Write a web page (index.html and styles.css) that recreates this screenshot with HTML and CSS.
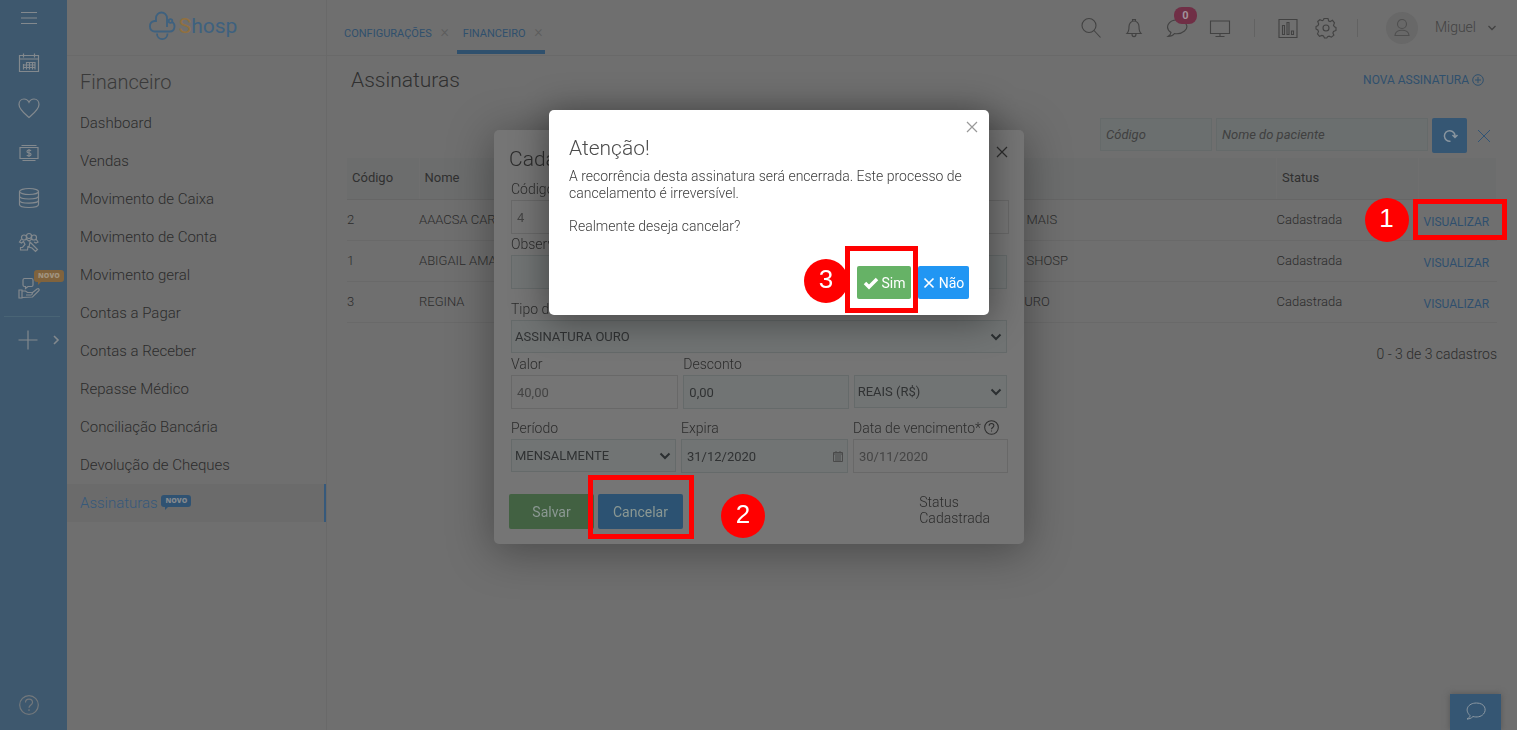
FILE: index.html
```html
<!DOCTYPE html>
<html lang="pt-BR">
<head>
<meta charset="utf-8">
<title>Shosp - Assinaturas</title>
<link rel="stylesheet" href="styles.css">
</head>
<body>
<div class="app">
  <nav class="rail" aria-label="Módulos">
    <button class="rail-item menu-toggle" aria-label="Menu"><svg width="20" height="20" viewBox="0 0 20 20"><path d="M2 4.500h16M2 10h16M2 15.500h16"/></svg></button>
    <button class="rail-item" aria-label="Agenda"><svg width="22" height="22" viewBox="0 0 22 22"><path d="M1.500 3.500h19v16h-19zM1.500 7h19M5.500 1.500v4M16.500 1.500v4M8 10.500h9M5 13h12M5 15.500h12M5.500 12v5.500M8.500 10v7.500M11.500 10v7.500M14.500 10v7.500M17 10v7.500"/></svg></button>
    <button class="rail-item" aria-label="Saúde"><svg width="24" height="22" viewBox="0 0 24 22"><path d="M12 20.500C8 17 2 12.500 2 7.500 2 4.500 4 2 7 2c2.200 0 4 1.200 5 3.300C13 3.200 14.800 2 17 2c3 0 5 2.500 5 5.500 0 5-6 9.500-10 13z"/></svg></button>
    <button class="rail-item" aria-label="Financeiro"><svg width="22" height="22" viewBox="0 0 22 22"><path d="M2 5.500h18v11H2zM3.500 3.500h15M4.500 18.500h13M13 8.800c-.5-.7-1.200-.8-2-.8-2.700 0-2.700 2.900 0 3s2.700 3 0 3c-.9 0-1.600-.2-2.200-.9M11 7v8"/></svg></button>
    <button class="rail-item" aria-label="Estoque"><svg width="22" height="22" viewBox="0 0 22 22"><ellipse cx="11" cy="4.500" rx="9.500" ry="3"/><path d="M1.500 4.500v13c0 4 19 4 19 0v-13M1.500 9c0 4 19 4 19 0M1.500 13.200c0 4 19 4 19 0"/></svg></button>
    <button class="rail-item" aria-label="Relacionamento"><svg width="22" height="22" viewBox="0 0 22 22"><circle cx="6" cy="5.500" r="2.500"/><circle cx="11" cy="4" r="2.500"/><circle cx="16" cy="5.500" r="2.500"/><path d="M3.500 7L1.500 10l2 1 2-1.500 1.500 3-2.500 3H2.500v2.500h7l.5-4M8 7l3 2 3-2M18 7l2 3-2 1-2-1M12 10l7.500 7.500-2 2L14 16l-3-1 1-5z"/></svg></button>
    <button class="rail-item" aria-label="Benefícios"><svg width="24" height="24" viewBox="0 0 24 24"><path d="M7.500 2.500h7a1.500 1.500 0 0 1 1.500 1.500v5a1.500 1.500 0 0 1-1.500 1.500H11L8.500 12.500v-2h-1A1.500 1.500 0 0 1 6 9V4a1.500 1.500 0 0 1 1.500-1.500zM2 14h3v8H2zM5 15h3.500l2 1.500h3.500c2 0 1.500 2.500 0 2.500H9M15 17l5-4c2-1 3 1 1.500 2l-6 6L5 21.500"/></svg><span class="novo novo-orange">NOVO</span></button>
    <div class="rail-add">
      <button class="rail-item" aria-label="Adicionar"><svg width="22" height="22" viewBox="0 0 22 22"><path d="M11 1.500v19M1.500 11h19"/></svg></button>
      <svg class="rail-chevron" width="8" height="12" viewBox="0 0 8 12"><path d="M2 2l4 4-4 4"/></svg>
    </div>
    <button class="rail-item rail-help" aria-label="Ajuda"><svg width="22" height="22" viewBox="0 0 22 22"><circle cx="11" cy="11" r="9.300"/><path d="M7.500 8.500c0-4.500 7-4.500 7 0 0 2.500-3.500 2.500-3.500 5.200M11 15.300v1.700"/></svg></button>
  </nav>

  <aside class="side">
    <div class="logo">
      <svg width="28" height="30" viewBox="0 0 28 30"><path d="M19 16V7a5.500 5.500 0 0 0-11 0v3H6.500a5.300 5.300 0 0 0 0 10.500H22c5 0 6-7.500 2-9.500M9 22.500c0 7.500 10.500 7.500 10.500 0"/><circle cx="22.500" cy="10" r="1.800"/></svg>
      <span class="brand"><b>S</b>hosp</span>
    </div>
    <h2>Financeiro</h2>
    <ul>
      <li><a href="#">Dashboard</a></li>
      <li><a href="#">Vendas</a></li>
      <li><a href="#">Movimento de Caixa</a></li>
      <li><a href="#">Movimento de Conta</a></li>
      <li><a href="#">Movimento geral</a></li>
      <li><a href="#">Contas a Pagar</a></li>
      <li><a href="#">Contas a Receber</a></li>
      <li><a href="#">Repasse Médico</a></li>
      <li><a href="#">Conciliação Bancária</a></li>
      <li><a href="#">Devolução de Cheques</a></li>
      <li class="active"><a href="#">Assinaturas <span class="novo">NOVO</span></a></li>
    </ul>
  </aside>

  <div class="content">
    <header class="topbar">
      <div class="tabs">
        <a class="tab" href="#">CONFIGURAÇÕES <i>×</i></a>
        <a class="tab current" href="#">FINANCEIRO <i>×</i></a>
      </div>
      <div class="tools">
        <button aria-label="Buscar"><svg width="22" height="22" viewBox="0 0 22 22"><circle cx="9" cy="8.500" r="7"/><path d="M14 13.500l6.500 7"/></svg></button>
        <button aria-label="Alertas"><svg width="20" height="22" viewBox="0 0 20 22"><path d="M3 16.500c2-2 2-4 2-7a5 5.500 0 0 1 10 0c0 3 0 5 2 7zM8.500 4V2.500h3V4M8 17c0 3.500 4 3.500 4 0"/></svg></button>
        <button class="chat" aria-label="Mensagens"><svg width="22" height="22" viewBox="0 0 22 22"><path d="M5 15.500C-1.500 11 2 3 11 3s12.500 7 7.500 11c-3 2.500-7 3-10 2.500C7 18.500 5 19.500 2 19.500c2-1.500 3-2.500 3-4z"/></svg><span class="count">0</span></button>
        <button aria-label="Monitor"><svg width="22" height="22" viewBox="0 0 22 22"><path d="M1.500 4h19v12.500h-19zM11 16.500V19M6.500 19.500h9"/></svg></button>
        <span class="divider"></span>
        <button class="narrow" aria-label="Relatórios"><svg width="22" height="22" viewBox="0 0 22 22"><path d="M2 2.500h18v18H2zM5.500 8.500h2v9h-2zM10 5.500h2v12h-2zM14.500 14h2v3.500h-2z"/></svg></button>
        <button class="narrow" aria-label="Configurações"><svg width="22" height="22" viewBox="0 0 22 22"><circle cx="11" cy="11" r="3"/><path d="M9 1.500h4l.7 2.500 1.500.6L17.500 3.300l2 2.500-1 2.600 1 1.400 1.500.7v3l-2.500 1-.6 1.500 1 2.200-2.500 2-2.300-1-1.500.6L11.800 21H9.500l-1-2-1.600-.6-2.400.9-2-2.400 1-2.300-.7-1.600L1 12V9.500l2-1 .7-1.500-1-2.500 2.200-1.800 2.400 1L8.500 3z"/></svg></button>
        <span class="divider"></span>
        <button class="user"><span class="avatar"><svg width="20" height="22" viewBox="0 0 20 22"><circle cx="10" cy="7" r="4.500"/><path d="M3 18.500c0-7 14-7 14 0z"/></svg></span><span class="user-name">Miguel</span><svg class="caret" width="10" height="8" viewBox="0 0 10 8"><path d="M1.500 2L5 5.500 8.500 2"/></svg></button>
      </div>
    </header>
    <main>
      <div class="page-head">
        <h1>Assinaturas</h1>
        <a class="new" href="#">NOVA ASSINATURA <svg width="12" height="12" viewBox="0 0 12 12"><circle cx="6" cy="6" r="5.300"/><path d="M6 3v6M3 6h6"/></svg></a>
      </div>
      <form class="filters">
        <input class="f-code" type="text" placeholder="Código" aria-label="Código">
        <input class="f-name" type="text" placeholder="Nome do paciente" aria-label="Nome do paciente">
        <button class="reload" type="button" aria-label="Atualizar"><svg width="16" height="16" viewBox="0 0 16 16"><path d="M8.500 13.200A5.300 5.300 0 1 1 13 8.500M10.500 7l2.500 2.500L15.500 7"/></svg></button>
        <button class="clear" type="button" aria-label="Limpar"><svg width="14" height="14" viewBox="0 0 14 14"><path d="M1 1l12 12M13 1L1 13"/></svg></button>
      </form>
      <table>
        <colgroup><col class="c-code"><col><col class="c-plan"><col class="c-status"><col class="c-act"></colgroup>
        <thead><tr><th>Código</th><th>Nome</th><th></th><th>Status</th><th></th></tr></thead>
        <tbody>
          <tr><td>2</td><td>AAACSA CARDOSO</td><td class="indent">MAIS</td><td>Cadastrada</td><td class="act"><a href="#">VISUALIZAR</a><span class="mark mark-one"></span><span class="step step-one">1</span></td></tr>
          <tr><td>1</td><td>ABIGAIL AMARAL</td><td class="indent">SHOSP</td><td>Cadastrada</td><td class="act"><a href="#">VISUALIZAR</a></td></tr>
          <tr><td>3</td><td>REGINA</td><td>OURO</td><td>Cadastrada</td><td class="act"><a href="#">VISUALIZAR</a></td></tr>
        </tbody>
      </table>
      <p class="total">0 - 3 de 3 cadastros</p>
    </main>
  </div>
</div>

<button class="support" aria-label="Chat"><svg width="22" height="20" viewBox="0 0 22 20"><path d="M5 14.500C-1 9 3 2 11.500 2S22 9 18.500 13c-2.500 3-7 3.500-10.500 2.500C6 17.500 4 18 2 18c2-1 3-2 3-3.500z"/></svg></button>

<div class="layer">
  <form class="dialog edit" role="dialog" aria-label="Cadastro">
    <button class="close" type="button" aria-label="Fechar"><svg width="12" height="12" viewBox="0 0 12 12"><path d="M1 1l10 10M11 1L1 11"/></svg></button>
    <h2>Cadastro</h2>
    <div class="field code"><label for="cod">Código</label><input id="cod" class="locked" type="text" value="4"></div>
    <div class="field obs"><label for="obs">Observação</label><input id="obs" type="text"></div>
    <div class="field kind"><label for="tipo">Tipo de assinatura</label><span class="pick"><select id="tipo"><option>ASSINATURA OURO</option></select><svg width="12" height="10" viewBox="0 0 12 10"><path d="M1.500 2.500L6 7l4.500-4.500"/></svg></span></div>
    <div class="row values">
      <div class="field"><label for="valor">Valor</label><input id="valor" class="locked" type="text" value="40,00"></div>
      <div class="field"><label for="desc">Desconto</label><input id="desc" type="text" value="0,00"></div>
      <div class="field bottom"><span class="pick"><select aria-label="Moeda"><option>REAIS (R$)</option></select><svg width="12" height="10" viewBox="0 0 12 10"><path d="M1.500 2.500L6 7l4.500-4.500"/></svg></span></div>
    </div>
    <div class="row dates">
      <div class="field"><label for="per">Período</label><span class="pick"><select id="per"><option>MENSALMENTE</option></select><svg width="12" height="10" viewBox="0 0 12 10"><path d="M1.500 2.500L6 7l4.500-4.500"/></svg></span></div>
      <div class="field"><label for="exp">Expira</label><span class="pick date"><input id="exp" type="text" value="31/12/2020"><svg width="10" height="11" viewBox="0 0 10 11"><path d="M.5 1.500h9v9h-9zM.5 3h9M2 5h6M2 7h6M2 9h6M3 0v2M7 0v2"/></svg></span></div>
      <div class="field"><label for="venc">Data de vencimento* <svg class="hint" width="15" height="15" viewBox="0 0 22 22"><circle cx="11" cy="11" r="10"/><path d="M7.500 8.500c0-4.500 7-4.500 7 0 0 2.500-3.500 2.500-3.500 5.200M11 15.300v1.700"/></svg></label><input id="venc" class="locked" type="text" value="30/11/2020"></div>
    </div>
    <div class="footer">
      <button class="save" type="button">Salvar</button>
      <button class="cancel" type="button">Cancelar</button>
      <p>Status<br>Cadastrada</p>
    </div>
    <span class="mark mark-two"></span><span class="step step-two">2</span>
  </form>
</div>

<div class="layer layer-top">
  <section class="dialog confirm" role="alertdialog" aria-label="Atenção!">
    <button class="close" type="button" aria-label="Fechar"><svg width="12" height="12" viewBox="0 0 12 12"><path d="M1 1l10 10M11 1L1 11"/></svg></button>
    <h2>Atenção!</h2>
    <p>A recorrência desta assinatura será encerrada. Este processo de cancelamento é irreversível.</p>
    <p>Realmente deseja cancelar?</p>
    <div class="answers">
      <button class="yes" type="button"><svg width="16" height="14" viewBox="0 0 16 14"><path d="M2 7l4 4 8-8"/></svg>Sim</button>
      <button class="no" type="button"><svg width="12" height="12" viewBox="0 0 12 12"><path d="M1.500 1.500l9 9M10.500 1.500l-9 9"/></svg>Não</button>
    </div>
    <span class="mark mark-three"></span><span class="step step-three">3</span>
  </section>
</div>
</body>
</html>
```

FILE: styles.css
```css
* { box-sizing: border-box; }
body {
  margin: 0;
  background: #6f6f6f;
  color: #2c2c2c;
  font: 300 14px/16px Roboto, sans-serif;
  overflow: hidden;
}
h1, h2, p, ul { margin: 0; padding: 0; font-weight: 300; }
ul { list-style: none; }
a { color: #2f4f6e; text-decoration: none; }
button { border: 0; padding: 0; background: none; font: inherit; color: inherit; }
svg { fill: none; stroke: currentColor; flex: none; }
.app { display: flex; min-height: 100vh; }

.rail {
  width: 67px;
  background: #3e586e;
  color: #83898e;
  display: flex;
  flex-direction: column;
  align-items: flex-start;
  padding: 8px 0 14px;
}
.rail-item { position: relative; display: flex; align-items: center; justify-content: center; width: 58px; height: 45px; stroke-width: 1.2; }
.rail-item.menu-toggle { height: 20px; margin-bottom: 12px; }
.rail-add { display: flex; align-items: center; width: 56px; margin: 6px 0 0 4px; border-top: 1px solid #496475; }
.rail-add .rail-item { width: 50px; height: 46px; }
.rail-chevron { stroke-width: 1.6; }
.rail-help { height: 22px; margin-top: auto; color: #73787c; }
.novo {
  position: relative;
  display: inline-block;
  padding: 0 4px;
  border-radius: 3px;
  background: #2f5272;
  color: #85898d;
  font: 900 7px/12px "Open Sans", sans-serif;
  vertical-align: 5px;
}
.novo::after { content: ""; position: absolute; left: 4px; top: 11px; border: 2px solid transparent; border-top-color: #2f5272; border-left-color: #2f5272; }
.novo-orange { position: absolute; left: 34px; top: 5px; background: #80633d; color: #a0937f; }
.novo-orange::after { border-top-color: #80633d; border-left-color: #80633d; }

.side { width: 260px; border-right: 1px solid #696969; }
.logo { display: flex; align-items: center; justify-content: center; height: 56px; gap: 3px; padding: 0 8px 4px 0; border-bottom: 1px solid #6a6a6a; color: #3e617f; }
.logo svg { stroke-width: 1.8; }
.brand { font: 400 21px/28px Roboto, sans-serif; }
.brand b { color: #91703f; font-weight: 400; }
.side h2 { padding: 14px 13px; font-size: 20px; line-height: 24px; height: 48px; color: #3a3a3a; }
.side li { height: 38px; padding: 0 13px; font-size: 15px; line-height: 38px; }
.side li a { color: #2c2c2c; }
.side li.active { background: #6b6b6b; border-right: 2px solid #36597b; }
.side li.active a { color: #36597b; }

.content { flex: 1; min-width: 0; }
.topbar { display: flex; justify-content: space-between; height: 56px; border-bottom: 1px solid #696969; padding-right: 20px; }
.tabs { display: flex; padding-left: 6px; }
.tab { height: 54px; padding: 25px 2px 0 6px; margin-left: 5px; font-size: 11px; font-weight: 400; color: #2f506d; }
.tab:first-child { padding-right: 3px; }
.tab i { padding-left: 6px; font: 300 16px/14px Roboto, sans-serif; color: #5c5c5c; }
.tab.current { border-bottom: 4px solid #2f506d; }
.tools { display: flex; align-items: center; color: #424242; }
.tools button { display: flex; align-items: center; justify-content: center; width: 43px; stroke-width: 1.1; }
.tools .narrow { width: 38px; }
.divider { width: 1px; height: 18px; margin: 0 14px 0 12px; background: #626262; }
.chat { position: relative; }
.count { position: absolute; left: 18px; top: -10px; width: 23px; height: 17px; border-radius: 8px; background: #702f46; color: #a1929a; font-size: 11px; font-weight: 700; line-height: 17px; }
.tools .user { width: auto; margin-left: 14px; }
.avatar { display: flex; align-items: center; justify-content: center; width: 32px; height: 32px; border-radius: 50%; background: #686868; color: #4f4f4f; }
.user-name { margin: 0 11px 2px 17px; }
.caret { stroke-width: 1.3; }

main { padding: 12px 20px 0; }
.page-head { display: flex; justify-content: space-between; align-items: center; padding: 0 13px 0 4px; }
h1 { font-size: 21px; line-height: 24px; color: #303030; }
.new { font-size: 12px; font-weight: 400; color: #2f506d; }
.new svg { vertical-align: -2px; }
.filters { display: flex; justify-content: flex-end; gap: 4px; margin-top: 26px; }
input, select { border: 1px solid #656a6a; border-radius: 0; background: #6b6f6f; color: #303233; font: 400 13px/16px Roboto, sans-serif; outline: 0; margin: 0; min-width: 0; }
.filters input { height: 33px; padding: 0 5px; }
.filters input::placeholder { color: #404040; font-style: italic; opacity: 1; }
.f-code { width: 112px; }
.f-name { width: 212px; }
.reload { display: flex; align-items: center; justify-content: center; width: 35px; height: 35px; background: #355673; border-radius: 2px; color: #89959f; stroke-width: 1.5; }
.clear { width: 26px; display: flex; align-items: center; justify-content: center; color: #315475; }
table { width: 100%; table-layout: fixed; border-collapse: collapse; margin-top: 5px; font-size: 13px; }
.c-code { width: 72px; }
.c-plan { width: 261px; }
.c-status { width: 142px; }
.c-act { width: 78px; }
th { height: 41px; padding: 0 5px; text-align: left; font-weight: 400; color: #303030; background: #6c6d6d; border-bottom: 1px solid #666; border-right: 1px solid #6f6f6f; }
td { height: 41px; padding: 0 1px 0 0; border-bottom: 1px solid #696969; white-space: nowrap; }
td.indent { padding-left: 11px; }
td.act { position: relative; padding: 4px 5px 0; font-size: 12px; font-weight: 400; }
.total { margin-top: 23px; text-align: right; }
.support { position: fixed; right: 16px; bottom: 0; width: 51px; height: 36px; background: #355673; color: #8c98a2; box-shadow: 0 0 6px #555; }

.layer { position: fixed; inset: 0; display: flex; justify-content: center; align-items: flex-start; padding: 130px 0 0 1px; }
.layer-top { padding: 110px 0 0 21px; }
.dialog { position: relative; border-radius: 5px; }
.dialog h2 { font-size: 21px; line-height: 24px; }
.close { position: absolute; line-height: 0; stroke-width: 1.2; }
.edit { width: 530px; padding: 17px 17px 15px; background: #757575; box-shadow: 0 6px 44px 2px rgba(0,0,0,.34); }
.edit h2 { margin: 0 0 9px -2px; }
.edit .close { right: 16px; top: 16px; }
.field { display: flex; flex-direction: column; min-width: 0; }
.field label { height: 20px; line-height: 18px; }
.field input, .field select { height: 34px; width: 100%; padding: 0 5px; background: #717474; }
.field select { padding: 0 3px; height: 33px; appearance: none; display: block; }
.field input.locked { background: #757575; color: #444; border-color: #686868; }
.code { margin-right: -2px; }
.obs { margin-top: 1px; }
.kind { margin-top: 11px; }
.pick { position: relative; display: block; }
.pick svg { position: absolute; right: 5px; top: 12px; stroke-width: 2; color: #2b2f31; }
.pick.date svg { stroke-width: 1; color: #4a4a4a; }
.row { display: grid; gap: 5px; }
.values { grid-template-columns: 167fr 165fr 153fr; margin-top: 2px; }
.dates { grid-template-columns: 165fr 167fr 155fr; margin: 10px -1px 0 0; }
.bottom { padding-top: 20px; }
.hint { vertical-align: -2px; stroke-width: 1.5; }
.footer { display: flex; gap: 4px; margin: 21px 0 0 -2px; height: 35px; }
.footer button { width: 85px; border-radius: 2px; color: #8b9893; font-weight: 400; }
.save { background: #426142; }
.cancel { background: #2c5272; }
.footer p { margin-left: auto; padding-right: 17px; }

.confirm { width: 440px; min-height: 205px; padding: 26px 20px 16px; background: #fff; color: #3c3c3c; box-shadow: 0 4px 36px 2px rgba(0,0,0,.4); }
.confirm .close { right: 11px; top: 11px; color: #999; }
.confirm h2 { color: #4c4c4c; }
.confirm p { line-height: 17px; margin-top: 8px; }
.confirm p + p { margin-top: 16px; }
.answers { display: flex; justify-content: flex-end; gap: 7px; margin-top: 31px; }
.answers button { display: flex; align-items: center; justify-content: center; gap: 3px; height: 33px; border-radius: 2px; color: #fff; font-weight: 400; }
.answers .yes { background: #66b266; width: 54px; }
.answers .yes svg { stroke-width: 3.5; }
.answers .no { background: #2196f3; gap: 4px; width: 51px; }
.answers .no svg { stroke-width: 1.7; }

.mark { position: absolute; border: 5px solid #f00; }
.step { position: absolute; width: 44px; height: 44px; border-radius: 50%; background: #f00; color: #fff; text-align: center; font: 400 26px/40px "Liberation Sans", sans-serif; }
.mark-one { left: -6px; top: -1px; width: 94px; height: 41px; }
.step-one { left: -54px; top: -2px; }
.mark-two { left: 94px; top: 345px; width: 106px; height: 64px; }
.step-two { left: 227px; top: 364px; }
.mark-three { z-index: 1; left: 296px; top: 136px; width: 73px; height: 67px; }
.step-three { left: 255px; top: 149px; }
```
